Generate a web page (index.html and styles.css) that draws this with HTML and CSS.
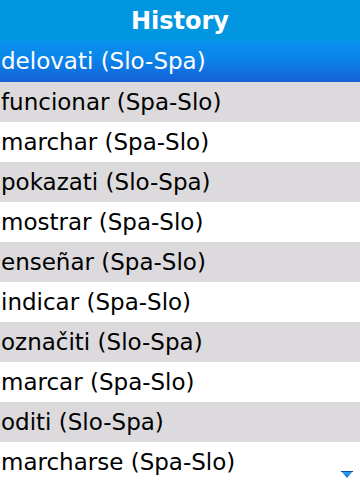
FILE: index.html
```html
<!DOCTYPE html>
<html>
<head>
<meta charset="utf-8">
<link rel="stylesheet" href="styles.css">
</head>
<body>
<div class="screen">
  <div class="title">History</div>
  <ul class="list">
    <li class="row selected">delovati (Slo-Spa)</li>
    <li class="row alt">funcionar (Spa-Slo)</li>
    <li class="row">marchar (Spa-Slo)</li>
    <li class="row alt">pokazati (Slo-Spa)</li>
    <li class="row">mostrar (Spa-Slo)</li>
    <li class="row alt">enseñar (Spa-Slo)</li>
    <li class="row">indicar (Spa-Slo)</li>
    <li class="row alt">označiti (Slo-Spa)</li>
    <li class="row">marcar (Spa-Slo)</li>
    <li class="row alt">oditi (Slo-Spa)</li>
    <li class="row">marcharse (Spa-Slo)</li>
  </ul>
  <svg class="more" width="12" height="8" viewBox="0 0 12 8">
    <defs>
      <linearGradient id="g" x1="0" y1="0" x2="0" y2="1">
        <stop offset="0" stop-color="#3aa8f0"/>
        <stop offset="1" stop-color="#0a6ad8"/>
      </linearGradient>
    </defs>
    <polygon points="0,0 12,0 6,7" fill="url(#g)"/>
    <line x1="0" y1="0.5" x2="12" y2="0.5" stroke="#0a4fb0" stroke-width="1"/>
  </svg>
</div>
</body>
</html>
```
FILE: styles.css
```css
html, body {
  margin: 0;
  padding: 0;
  background: #ffffff;
}
.screen {
  position: relative;
  width: 360px;
  height: 480px;
  overflow: hidden;
  font-family: "DejaVu Sans", sans-serif;
}
.title {
  height: 41px;
  background: #0396e0;
  color: #ffffff;
  font-weight: bold;
  font-size: 24px;
  line-height: 42px;
  text-align: center;
}
.list {
  list-style: none;
  margin: 0;
  padding: 0;
}
.row {
  height: 40px;
  line-height: 40px;
  font-size: 23px;
  padding-left: 1px;
  color: #000000;
  background: #ffffff;
  white-space: nowrap;
}
.row.alt {
  background: #dcdadc;
}
.row.selected {
  height: 41px;
  line-height: 41px;
  color: #ffffff;
  background: linear-gradient(to bottom, #0a90ee 0%, #0a86ea 40%, #1560d8 100%);
}
.more {
  position: absolute;
  right: 7px;
  bottom: 1px;
}
```
